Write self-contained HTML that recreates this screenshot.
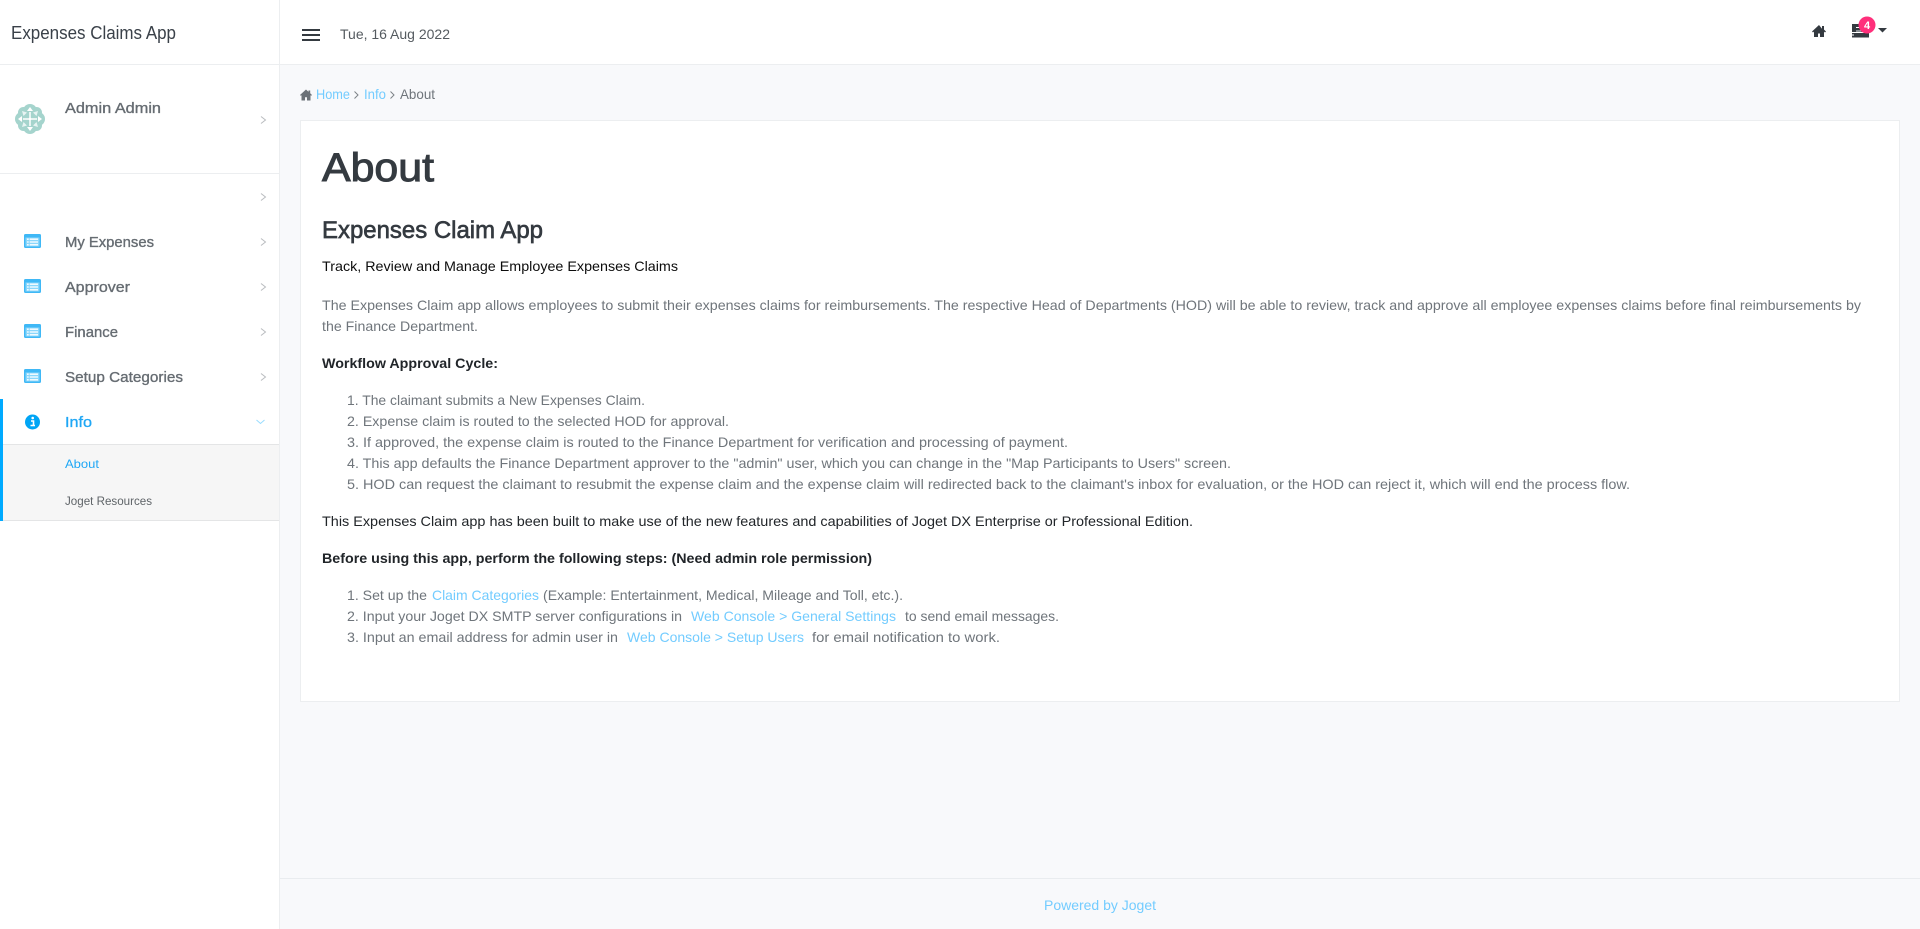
<!DOCTYPE html>
<html lang="en"><head><meta charset="utf-8"><title>Expenses Claims App</title>
<style>
html,body{margin:0;padding:0;width:1920px;height:929px;overflow:hidden;background:#f8f9fb}
body{position:relative;font-family:"Liberation Sans",sans-serif}
.b{position:absolute}
svg{position:absolute;left:0;top:0}
text{font-family:"Liberation Sans",sans-serif;font-size:14px;fill:#6f757b}
.s{fill:#666c72;font-size:15px;stroke:#666c72;stroke-width:.35px}
.lk{fill:#73ccff}
.d{fill:#212529}
.bd{fill:#212529;font-weight:bold}
.h{fill:#343a40;stroke:#343a40}
</style></head><body>
<div class="b" style="left:0;top:0;width:279px;height:929px;background:#fff;border-right:1px solid #eceef0"></div>
<div class="b" style="left:280px;top:0;width:1640px;height:64px;background:#fff;border-bottom:1px solid #eceef0"></div>
<div class="b" style="left:0;top:64px;width:279px;height:1px;background:#eceef0"></div>
<div class="b" style="left:0;top:173px;width:279px;height:1px;background:#eceef0"></div>
<div class="b" style="left:0;top:444px;width:279px;height:77px;background:#f6f6f6;border-top:1px solid #e4e5e6;border-bottom:1px solid #e4e5e6;box-sizing:border-box"></div>
<div class="b" style="left:0;top:399px;width:3px;height:122px;background:#00aaff"></div>
<div class="b" style="left:300px;top:120px;width:1598px;height:580px;background:#fff;border:1px solid #eceef0"></div>
<div class="b" style="left:280px;top:878px;width:1640px;height:1px;background:#e9ecef"></div>

<svg width="1920" height="929" viewBox="0 0 1920 929" xmlns="http://www.w3.org/2000/svg">
<defs>
<g id="tb"><rect x="0" y="0" width="17" height="14" rx="1.5" fill="#3fb8f6"/><rect x="1.5" y="3.500" width="14" height="9" fill="#8ad6fb"/><path d="M3 5.200h1.700M5.700 5.200h8.300M3 8h1.700M5.700 8h8.300M3 10.800h1.700M5.700 10.800h8.300" stroke="#fff" stroke-width="1.300"/></g>
<path id="cv" d="M0 0l4.500 3.500-4.500 3.500" fill="none" stroke="#b9bcbf" stroke-width="1"/>
</defs>

<!-- brand and header -->
<text x="11" y="39" textLength="165" lengthAdjust="spacingAndGlyphs" style="font-size:18px;fill:#3a4149">Expenses Claims App</text>
<path d="M302 30h18M302 35h18M302 40h18" stroke="#343a40" stroke-width="2"/>
<text x="340" y="39" textLength="110" lengthAdjust="spacingAndGlyphs" style="fill:#555b60">Tue, 16 Aug 2022</text>

<!-- top-right icons -->
<path d="M1819 25l-7 6.500 1 1 1-.9V37h4v-3.500h2V37h4v-5.400l1 .9 1-1-2-1.900V26h-2v2.700z" fill="#343a40"/>
<rect x="1852" y="24" width="17" height="13.500" fill="#343a40"/>
<path d="M1856 27.500h13M1852 32.500h13M1852 35h2" stroke="#fff" stroke-width="1"/>
<path d="M1856 31h10" stroke="#dfe3e6" stroke-width="1"/>
<circle cx="1867" cy="25" r="8.500" fill="#ff2f7b"/>
<text x="1867" y="29" text-anchor="middle" style="font-size:11px;font-weight:bold;fill:#fff">4</text>
<path d="M1878 28h9l-4.500 4.500z" fill="#343a40"/>

<!-- profile -->
<g transform="translate(15 104)" fill="#a5d4cd">
<circle cx="15" cy="7" r="7"/><circle cx="15" cy="23" r="7"/><circle cx="7" cy="15" r="7"/><circle cx="23" cy="15" r="7"/><circle cx="8.500" cy="8.500" r="5.500"/><circle cx="21.500" cy="8.500" r="5.500"/><circle cx="8.500" cy="21.500" r="5.500"/><circle cx="21.500" cy="21.500" r="5.500"/>
<path d="M15 8v14M8 15h14" stroke="#fff" stroke-width="1.500"/>
<path d="M15 3l3 4h-6zM15 27l3-4h-6zM3 15l4-3v6zM27 15l-4-3v6z" fill="#fff"/>
<path d="M7 7l5 1.500-3.500 3.500zM23 7l-5 1.500 3.500 3.500zM7 23l5-1.500-3.500-3.500zM23 23l-5-1.500 3.500-3.500z" fill="#fff" opacity=".75"/>
</g>
<text class="s" x="65" y="113" textLength="96" lengthAdjust="spacingAndGlyphs">Admin Admin</text>
<use href="#cv" x="261" y="116.500"/>
<use href="#cv" x="261" y="193.500"/>

<!-- menu -->
<use href="#tb" x="24" y="234"/><text class="s" x="65" y="247" textLength="89" lengthAdjust="spacingAndGlyphs">My Expenses</text><use href="#cv" x="261" y="238.500"/>
<use href="#tb" x="24" y="279"/><text class="s" x="65" y="292" textLength="65" lengthAdjust="spacingAndGlyphs">Approver</text><use href="#cv" x="261" y="283.500"/>
<use href="#tb" x="24" y="324"/><text class="s" x="65" y="337" textLength="53" lengthAdjust="spacingAndGlyphs">Finance</text><use href="#cv" x="261" y="328.500"/>
<use href="#tb" x="24" y="369"/><text class="s" x="65" y="382" textLength="118" lengthAdjust="spacingAndGlyphs">Setup Categories</text><use href="#cv" x="261" y="373.500"/>
<circle cx="32.500" cy="422" r="7.500" fill="#00a5f5"/><path d="M31 421h2.500v4.500M30.500 425.500h4.500" stroke="#fff" stroke-width="1.600" fill="none"/><circle cx="32.700" cy="418" r="1.300" fill="#fff"/>
<text x="65" y="427" textLength="27" lengthAdjust="spacingAndGlyphs" style="font-size:15px;fill:#1fa7f5;stroke:#1fa7f5;stroke-width:.35px">Info</text>
<path d="M256.500 420l4 3.500 4-3.500" fill="none" stroke="#98dcff" stroke-width="1"/>
<text x="65" y="468" textLength="34" lengthAdjust="spacingAndGlyphs" style="font-size:12px;fill:#1fa7f5">About</text>
<text x="65" y="505" textLength="87" lengthAdjust="spacingAndGlyphs" style="font-size:12px;fill:#5f6468">Joget Resources</text>

<!-- breadcrumb -->
<path d="M306 89.500l-6 5.500.800.800.700-.600V100.500h3.500v-3.200h2V100.500h3.500v-5.300l.700.600.800-.800-1.800-1.700V90.500h-1.700v1.400z" fill="#6c7278"/>
<text class="lk" x="316" y="99" textLength="34" lengthAdjust="spacingAndGlyphs">Home</text>
<path d="M354.500 91.500l3.500 3.500-3.500 3.500" fill="none" stroke="#7d8286"/>
<text class="lk" x="364" y="99" textLength="22" lengthAdjust="spacingAndGlyphs">Info</text>
<path d="M390.500 91.500l3.500 3.500-3.500 3.500" fill="none" stroke="#7d8286"/>
<text x="400" y="99" textLength="35" lengthAdjust="spacingAndGlyphs">About</text>

<!-- content -->
<text class="h" x="322" y="181" textLength="112" lengthAdjust="spacingAndGlyphs" style="font-size:40px;stroke-width:1px">About</text>
<text class="h" x="322" y="238" textLength="221" lengthAdjust="spacingAndGlyphs" style="font-size:24px;stroke-width:.65px">Expenses Claim App</text>
<text x="322" y="271" textLength="356" lengthAdjust="spacingAndGlyphs" style="fill:#0c0c0c">Track, Review and Manage Employee Expenses Claims</text>
<text x="322" y="310" textLength="1539" lengthAdjust="spacingAndGlyphs">The Expenses Claim app allows employees to submit their expenses claims for reimbursements. The respective Head of Departments (HOD) will be able to review, track and approve all employee expenses claims before final reimbursements by</text>
<text x="322" y="331" textLength="156" lengthAdjust="spacingAndGlyphs">the Finance Department.</text>
<text class="bd" x="322" y="368" textLength="176" lengthAdjust="spacingAndGlyphs">Workflow Approval Cycle:</text>
<text x="347" y="405" textLength="298" lengthAdjust="spacingAndGlyphs">1. The claimant submits a New Expenses Claim.</text>
<text x="347" y="426" textLength="382" lengthAdjust="spacingAndGlyphs">2. Expense claim is routed to the selected HOD for approval.</text>
<text x="347" y="447" textLength="721" lengthAdjust="spacingAndGlyphs">3. If approved, the expense claim is routed to the Finance Department for verification and processing of payment.</text>
<text x="347" y="468" textLength="884" lengthAdjust="spacingAndGlyphs">4. This app defaults the Finance Department approver to the "admin" user, which you can change in the "Map Participants to Users" screen.</text>
<text x="347" y="489" textLength="1283" lengthAdjust="spacingAndGlyphs">5. HOD can request the claimant to resubmit the expense claim and the expense claim will redirected back to the claimant's inbox for evaluation, or the HOD can reject it, which will end the process flow.</text>
<text class="d" x="322" y="526" textLength="871" lengthAdjust="spacingAndGlyphs">This Expenses Claim app has been built to make use of the new features and capabilities of Joget DX Enterprise or Professional Edition.</text>
<text class="bd" x="322" y="563" textLength="550" lengthAdjust="spacingAndGlyphs">Before using this app, perform the following steps: (Need admin role permission)</text>
<text x="347" y="600" textLength="80" lengthAdjust="spacingAndGlyphs">1. Set up the</text>
<text class="lk" x="432" y="600" textLength="107" lengthAdjust="spacingAndGlyphs">Claim Categories</text>
<text x="543" y="600" textLength="360" lengthAdjust="spacingAndGlyphs">(Example: Entertainment, Medical, Mileage and Toll, etc.).</text>
<text x="347" y="621" textLength="335" lengthAdjust="spacingAndGlyphs">2. Input your Joget DX SMTP server configurations in</text>
<text class="lk" x="691" y="621" textLength="205" lengthAdjust="spacingAndGlyphs">Web Console &gt; General Settings</text>
<text x="905" y="621" textLength="154" lengthAdjust="spacingAndGlyphs">to send email messages.</text>
<text x="347" y="642" textLength="271" lengthAdjust="spacingAndGlyphs">3. Input an email address for admin user in</text>
<text class="lk" x="627" y="642" textLength="177" lengthAdjust="spacingAndGlyphs">Web Console &gt; Setup Users</text>
<text x="812" y="642" textLength="188" lengthAdjust="spacingAndGlyphs">for email notification to work.</text>

<text class="lk" x="1044" y="910" textLength="112" lengthAdjust="spacingAndGlyphs">Powered by Joget</text>
</svg>
</body></html>
